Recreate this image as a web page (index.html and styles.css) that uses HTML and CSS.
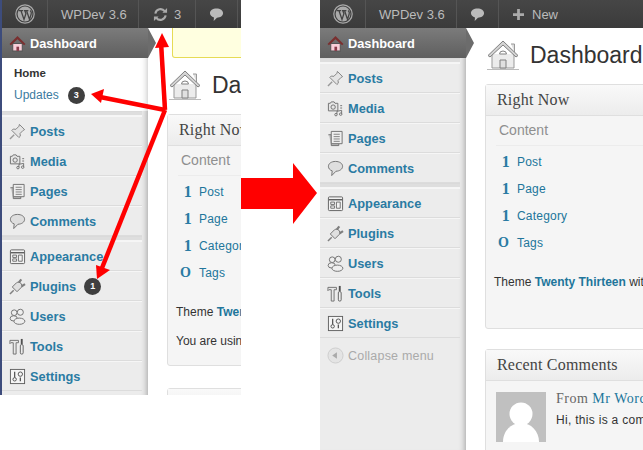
FILE: index.html
```html
<!DOCTYPE html>
<html lang="en">
<head>
    <meta charset="UTF-8">
    <meta name="viewport" content="width=device-width, initial-scale=1.0">
    <title>WordPress toolbar and menu changes</title>
    <link rel="stylesheet" href="styles.css">
</head>
<body>
    <svg class="hidden">
        <symbol id="i-wp" viewBox="0 0 20 20">
            <circle cx="10" cy="10" r="9.2" fill="none" stroke="#aaa" stroke-width="1.2"/>
            <circle cx="10" cy="10" r="7.4" fill="#aaa"/>
            <path d="M3.6 6.6h4.6M6 6.8l3 8.6 1.9-5.6-1-3M9 6.6h4.4M11.6 6.8l2.9 8.6 1.7-5.4c.5-1.5-.4-2.8-1.1-3.4" fill="none" stroke="#444" stroke-width="1.3"/>
        </symbol>
        <symbol id="i-refresh" viewBox="0 0 16 16">
            <path d="M2.5 7A5.6 5.6 0 0 1 12.5 4.5M13.5 9A5.6 5.6 0 0 1 3.5 11.5" fill="none" stroke="#aaa" stroke-width="2.2"/>
            <path d="M10 6h5V1zM6 10H1v5z" fill="#aaa"/>
        </symbol>
        <symbol id="i-bubble" viewBox="0 0 16 16">
            <path d="M8 1.5c4 0 7 2 7 5s-3 5-6.5 5L5 14.8l.3-3.6C2.8 10.5 1 8.8 1 6.5c0-3 3-5 7-5z" fill="#bbb"/>
        </symbol>
        <symbol id="i-plus" viewBox="0 0 12 12">
            <path d="M4.5 0h3v4.5H12v3H7.5V12h-3V7.5H0v-3h4.5z" fill="#aaa"/>
        </symbol>
        <symbol id="i-home" viewBox="0 0 16 16">
            <path d="M3.5 8v7h9V8z" fill="#f9cfd9" stroke="#555"/>
            <path d="M7 15v-4h2.5v4z" fill="#8a3b4a"/>
            <path d="M.5 8.5 8 1l7.5 7.5-1.3 1.2L8 4 1.8 9.7z" fill="#7a2f2f"/>
        </symbol>
        <symbol id="i-pin" viewBox="0 0 18 18">
            <path d="M5.5 12.5 1 17" stroke="#999" stroke-width="1.5"/>
            <path d="M11 1.5l5.5 5.5-1.5.8-3.3 3.3.3 2.8-1.5 1.5-7.5-7.5 1.5-1.5 2.8.3 3.3-3.3z" fill="#e4e4e4" stroke="#808080"/>
        </symbol>
        <symbol id="i-media" viewBox="0 0 18 18">
            <path d="M1.5 3.5h2l1-1.5h3l1 1.5h3v8h-10z" fill="#e6e6e6" stroke="#707070"/>
            <circle cx="6.5" cy="7.5" r="2.3" fill="none" stroke="#707070"/>
            <path d="M14 6h2M14 8.5h2M10.5 15v-3l5-1v3.5" fill="none" stroke="#707070"/>
            <circle cx="9.5" cy="15.5" r="1.3" fill="none" stroke="#707070"/>
            <circle cx="14.5" cy="15" r="1.3" fill="none" stroke="#707070"/>
        </symbol>
        <symbol id="i-pages" viewBox="0 0 18 18">
            <path d="M1.5 5h3v11.5h8v-2h-8" fill="#ccc" stroke="#707070"/>
            <path d="M4.5 1.5h11.5v13H4.5z" fill="#eee" stroke="#707070"/>
            <path d="M7 4.5h6.5M7 7h6.5M7 9.5h6.5M7 12h6.5" stroke="#808080"/>
        </symbol>
        <symbol id="i-comment" viewBox="0 0 18 18">
            <path d="M9 1.5c4.3 0 7.5 2.2 7.5 5.2s-3.2 5.1-7 5.2L5 16.5l.5-5C3 10.7 1.5 8.9 1.5 6.7c0-3 3.2-5.2 7.5-5.200z" fill="#dedede" stroke="#707070"/>
        </symbol>
        <symbol id="i-appearance" viewBox="0 0 18 18">
            <rect x="1.5" y="2" width="15" height="14.5" rx="1" fill="#f2f2f2" stroke="#606060"/>
            <path d="M2 5h14" stroke="#606060" stroke-width="1.5"/>
            <path d="M4 7.5h4V10H4zM4 11.5h4V14H4zM10 7.5h4V14h-4z" fill="none" stroke="#707070"/>
        </symbol>
        <symbol id="i-plugin" viewBox="0 0 18 18">
            <path d="M5 13 1 17" stroke="#808080" stroke-width="1.6"/>
            <path d="M10 5.5l3-4M13 9l4-2.5" stroke="#808080" stroke-width="2.4"/>
            <path d="M3.5 9.5 8 5c1.5-1 3.5-.5 4.500.5s1.5 3 .5 4.500l-4.500 4.500z" fill="#e0e0e0" stroke="#707070"/>
        </symbol>
        <symbol id="i-users" viewBox="0 0 18 18">
            <circle cx="5.5" cy="5" r="3" fill="#eee" stroke="#707070"/>
            <circle cx="12" cy="4.5" r="3.2" fill="#eee" stroke="#707070"/>
            <ellipse cx="5" cy="11" rx="3.8" ry="2.8" fill="#eee" stroke="#707070"/>
            <ellipse cx="11" cy="14" rx="5.8" ry="3.3" fill="#eee" stroke="#707070"/>
        </symbol>
        <symbol id="i-tools" viewBox="0 0 18 18">
            <path d="M1 2.5h9V5H7.5v12h-3V5H2L1 6z" fill="#e8e8e8" stroke="#707070"/>
            <path d="M13.5 1v6" stroke="#505050" stroke-width="2"/>
            <rect x="12" y="7" width="3" height="10" rx="1.3" fill="#eee" stroke="#606060"/>
        </symbol>
        <symbol id="i-settings" viewBox="0 0 18 18">
            <rect x="1.5" y="1.5" width="15" height="15" fill="#f5f5f5" stroke="#606060"/>
            <path d="M6 4v6M12 10v4" stroke="#505050" stroke-width="1.3"/>
            <circle cx="6" cy="12" r="1.8" fill="none" stroke="#505050"/>
            <circle cx="12" cy="6.5" r="2.3" fill="none" stroke="#505050"/>
        </symbol>
        <symbol id="i-collapse" viewBox="0 0 18 18">
            <circle cx="9" cy="9" r="8" fill="#e4e4e4" stroke="#ccc"/>
            <path d="M5.5 9l5-3.5v7z" fill="#aaa"/>
        </symbol>
        <symbol id="i-house" viewBox="0 0 32 30">
            <path d="M5 14v14h22V14" fill="#ececec" stroke="#999"/>
            <path d="M24 4h3.5v8" fill="#ddd" stroke="#999"/>
            <path d="M1 15.5 16 1l15 14.5-2 1.500L16 5 3 17z" fill="#d4d4d4" stroke="#808080"/>
            <path d="M13 28v-8h6v8z" fill="#e0e0e0" stroke="#808080"/>
            <path d="M12.5 14a3.5 3 0 0 1 7 0z" fill="none" stroke="#808080"/>
            <path d="M0 29.5h32" stroke="#bbb"/>
        </symbol>
    </svg>

    <div class="shot">
        <section class="panel panel-old">
            <div class="adminbar">
                <a class="bar-item bar-logo"><svg class="icon-logo"><use href="#i-wp"/></svg></a>
                <a class="bar-item bar-site">WPDev 3.6</a>
                <a class="bar-item bar-updates"><svg class="icon-bar"><use href="#i-refresh"/></svg>3</a>
                <a class="bar-item bar-comments"><svg class="icon-bar"><use href="#i-bubble"/></svg></a>
            </div>
            <div class="wp-body">
                <nav class="sidebar">
                    <a class="menu-current"><svg class="icon-menu"><use href="#i-home"/></svg>Dashboard</a>
                    <div class="submenu">
                        <a class="sub-home">Home</a>
                        <a class="sub-updates">Updates <span class="count">3</span></a>
                    </div>
                    <div class="menu-sep"></div>
                    <a class="menu-item"><svg class="icon-menu"><use href="#i-pin"/></svg>Posts</a>
                    <a class="menu-item"><svg class="icon-menu"><use href="#i-media"/></svg>Media</a>
                    <a class="menu-item"><svg class="icon-menu"><use href="#i-pages"/></svg>Pages</a>
                    <a class="menu-item"><svg class="icon-menu"><use href="#i-comment"/></svg>Comments</a>
                    <div class="menu-sep"></div>
                    <a class="menu-item"><svg class="icon-menu"><use href="#i-appearance"/></svg>Appearance</a>
                    <a class="menu-item"><svg class="icon-menu"><use href="#i-plugin"/></svg>Plugins <span class="count">1</span></a>
                    <a class="menu-item"><svg class="icon-menu"><use href="#i-users"/></svg>Users</a>
                    <a class="menu-item"><svg class="icon-menu"><use href="#i-tools"/></svg>Tools</a>
                    <a class="menu-item"><svg class="icon-menu"><use href="#i-settings"/></svg>Settings</a>
                </nav>
                <main class="content">
                    <div class="notice"></div>
                    <div class="page-title"><svg class="icon-house"><use href="#i-house"/></svg><h1>Dashboard</h1></div>
                    <div class="box box-now-old">
                        <h3>Right Now</h3>
                        <p class="box-sub">Content</p>
                        <ul class="stats">
                            <li><b>1</b><a>Post</a></li>
                            <li><b>1</b><a>Page</a></li>
                            <li><b>1</b><a>Category</a></li>
                            <li><b class="zero">O</b><a>Tags</a></li>
                        </ul>
                        <p class="theme-line">Theme <a>Twenty Thirteen</a></p>
                        <p class="version-line">You are using</p>
                    </div>
                    <div class="box">
                        <h3>Recent Comments</h3>
                    </div>
                </main>
            </div>
        </section>

        <section class="panel panel-new">
            <div class="adminbar">
                <a class="bar-item bar-logo"><svg class="icon-logo"><use href="#i-wp"/></svg></a>
                <a class="bar-item bar-site">WPDev 3.6</a>
                <a class="bar-item bar-comments"><svg class="icon-bar"><use href="#i-bubble"/></svg></a>
                <a class="bar-item bar-new"><svg class="icon-plus"><use href="#i-plus"/></svg>New</a>
            </div>
            <div class="wp-body">
                <nav class="sidebar">
                    <a class="menu-current"><svg class="icon-menu"><use href="#i-home"/></svg>Dashboard</a>
                    <div class="menu-sep"></div>
                    <a class="menu-item"><svg class="icon-menu"><use href="#i-pin"/></svg>Posts</a>
                    <a class="menu-item"><svg class="icon-menu"><use href="#i-media"/></svg>Media</a>
                    <a class="menu-item"><svg class="icon-menu"><use href="#i-pages"/></svg>Pages</a>
                    <a class="menu-item"><svg class="icon-menu"><use href="#i-comment"/></svg>Comments</a>
                    <div class="menu-sep"></div>
                    <a class="menu-item"><svg class="icon-menu"><use href="#i-appearance"/></svg>Appearance</a>
                    <a class="menu-item"><svg class="icon-menu"><use href="#i-plugin"/></svg>Plugins</a>
                    <a class="menu-item"><svg class="icon-menu"><use href="#i-users"/></svg>Users</a>
                    <a class="menu-item"><svg class="icon-menu"><use href="#i-tools"/></svg>Tools</a>
                    <a class="menu-item"><svg class="icon-menu"><use href="#i-settings"/></svg>Settings</a>
                    <a class="menu-collapse"><svg class="icon-menu"><use href="#i-collapse"/></svg>Collapse menu</a>
                </nav>
                <main class="content">
                    <div class="page-title"><svg class="icon-house"><use href="#i-house"/></svg><h1>Dashboard</h1></div>
                    <div class="box box-now-new">
                        <h3>Right Now</h3>
                        <p class="box-sub">Content</p>
                        <ul class="stats">
                            <li><b>1</b><a>Post</a></li>
                            <li><b>1</b><a>Page</a></li>
                            <li><b>1</b><a>Category</a></li>
                            <li><b class="zero">O</b><a>Tags</a></li>
                        </ul>
                        <p class="theme-line">Theme <a>Twenty Thirteen</a> with 6 Widgets</p>
                    </div>
                    <div class="box">
                        <h3>Recent Comments</h3>
                        <div class="comment">
                            <svg class="avatar" viewBox="0 0 50 50">
                                <rect width="50" height="50" fill="#c0c0c0"/>
                                <circle cx="25" cy="22" r="11.5" fill="#fff"/>
                                <path d="M7 50c0-11 8-19 18-19s18 8 18 19z" fill="#fff"/>
                            </svg>
                            <div class="comment-text">
                                <h4>From <a>Mr WordPress</a> on Hello world!</h4>
                                <p>Hi, this is a comment. To delete a comment</p>
                            </div>
                        </div>
                    </div>
                </main>
            </div>
        </section>

        <!-- red annotations drawn over both screenshots -->
        <svg class="notes" viewBox="0 0 643 450">
            <path d="M241 178h52v-15l24 30-24 31v-15h-52z" fill="#f00"/>
            <g fill="none" stroke="#f00" stroke-width="4.5">
                <path d="M165 110 161 42"/>
                <path d="M165 110 100 97"/>
                <path d="M165 110 102 268"/>
            </g>
            <g fill="#f00">
                <path d="M162 33l7 14-14 1z"/>
                <path d="M91 94l13-5-3 14z"/>
                <path d="M97 279l-1-14 14 5z"/>
            </g>
        </svg>
    </div>
</body>
</html>
```

FILE: styles.css
```css
body {
    margin: 0;
    background: #fff;
    font-family: "Liberation Sans", Arial, sans-serif;
    color: #333;
}

.hidden {
    display: none;
}

.shot {
    position: relative;
    display: flex;
    align-items: flex-start;
    width: 643px;
    height: 450px;
    overflow: hidden;
}

.panel {
    display: flex;
    flex-direction: column;
    overflow: hidden;
}

.panel-old {
    width: 239px;
    height: 395px;
    border-left: 2px solid #3d4c7c;
}

.panel-new {
    width: 323px;
    height: 450px;
    margin-left: 79px;
}

.notes {
    position: absolute;
    left: 0;
    top: 0;
    width: 643px;
    height: 450px;
}

/* toolbar */
.adminbar {
    display: flex;
    flex: none;
    height: 28px;
    background: linear-gradient(to bottom, #464646, #3b3b3b);
    color: #bbb;
    font-size: 13px;
}

.bar-item {
    display: flex;
    align-items: center;
    border-right: 1px solid #555;
    box-sizing: border-box;
}

.bar-logo {
    width: 46px;
    padding-left: 13px;
}

.bar-site {
    width: 91px;
    padding-left: 13px;
}

.bar-updates {
    width: 57px;
    padding-left: 14px;
    gap: 6px;
}

.bar-comments {
    width: 42px;
    padding-left: 13px;
}

.bar-new {
    border-right: none;
    padding-left: 14px;
    gap: 8px;
}

.icon-logo {
    width: 20px;
    height: 20px;
}

.icon-bar {
    width: 15px;
    height: 15px;
}

.icon-plus {
    width: 11px;
    height: 11px;
}

/* left menu */
.wp-body {
    display: flex;
    flex: 1;
    min-height: 0;
}

.sidebar {
    position: relative;
    flex: none;
    width: 146px;
    background: #ececec;
    box-shadow: inset -7px 0 7px -7px rgba(0, 0, 0, 0.4);
}

.menu-current,
.menu-item,
.menu-collapse {
    display: flex;
    align-items: center;
    box-sizing: border-box;
    height: 30px;
    padding: 1px 0 0 7px;
    font-size: 12.8px;
    font-weight: bold;
    color: #2a7ba3;
}

.menu-item {
    width: 140px;
    border-top: 1px solid #f6f6f6;
    border-bottom: 1px solid #dcdcdc;
}

.menu-current {
    position: relative;
    background: linear-gradient(to bottom, #7b7b7b, #5f5f5f);
    color: #fff;
}

.menu-current::after {
    content: "";
    position: absolute;
    left: 100%;
    top: 0;
    border-left: 8px solid #6c6c6c;
    border-top: 15px solid transparent;
    border-bottom: 15px solid transparent;
}

.menu-collapse {
    height: 34px;
    font-size: 12.5px;
    font-weight: normal;
    letter-spacing: 0.2px;
    color: #aaa;
}

.icon-menu {
    flex: none;
    width: 17px;
    height: 17px;
    margin-right: 4px;
}

.menu-sep {
    height: 3px;
    border-top: 1px solid #dadada;
    border-bottom: 1px solid #f5f5f5;
    background: #dedede;
    width: 140px;
}

.submenu {
    display: flex;
    flex-direction: column;
    height: 53px;
    box-sizing: border-box;
    padding: 4px 0 0 12px;
    background: #fff;
    box-shadow: inset -7px 0 7px -7px rgba(0, 0, 0, 0.3);
    font-size: 12px;
}

.submenu a {
    display: flex;
    align-items: center;
    gap: 8px;
    height: 22px;
}

.sub-home {
    font-weight: bold;
    font-size: 11.5px;
    color: #333;
}

.sub-updates {
    color: #3b7ba0;
}

.count {
    display: inline-block;
    width: 17px;
    height: 17px;
    margin-left: 8px;
    border-radius: 50%;
    background: #3f3f3f;
    color: #fff;
    font-size: 9px;
    font-weight: bold;
    line-height: 17px;
    text-align: center;
}

.submenu .count {
    margin-left: 1px;
}

/* dashboard */
.content {
    flex: 1;
    min-width: 0;
    overflow: hidden;
    background: #fff;
}

.notice {
    height: 29px;
    margin-left: 24px;
    width: 120px;
    background: #ffffe0;
    border: 1px solid #e6db55;
    border-top: none;
    border-bottom-left-radius: 3px;
}

.page-title {
    display: flex;
    align-items: center;
    height: 30px;
    padding: 12px 0 14px 21px;
}

.icon-house {
    flex: none;
    width: 32px;
    height: 30px;
}

.page-title h1 {
    margin: 0 0 0 11px;
    font-size: 23px;
    font-weight: normal;
    color: #333;
    white-space: nowrap;
}

.box {
    box-sizing: border-box;
    width: 340px;
    margin: 0 0 20px 19px;
    background: #f5f5f5;
    border: 1px solid #dfdfdf;
    border-radius: 3px;
}

.box-now-old {
    height: 252px;
    margin-bottom: 22px;
}

.box-now-new {
    height: 245px;
}

.box h3 {
    box-sizing: border-box;
    height: 31px;
    margin: 0;
    padding-left: 11px;
    border-bottom: 1px solid #dfdfdf;
    background: linear-gradient(to bottom, #f9f9f9, #ececec);
    font-family: "Liberation Serif", Georgia, serif;
    font-size: 16px;
    font-weight: normal;
    letter-spacing: 0.2px;
    line-height: 29px;
    color: #444;
}

.box-sub {
    height: 29px;
    margin: 0 0 0 10px;
    padding-left: 3px;
    border-bottom: 1px solid #ececec;
    font-size: 14px;
    line-height: 29px;
    color: #8f8f8f;
}

.stats {
    margin: 2px 0 0;
    padding: 0;
    list-style: none;
}

.stats li {
    display: flex;
    align-items: center;
    height: 27px;
    font-size: 12px;
    letter-spacing: 0.2px;
}

.stats b {
    width: 24px;
    margin-right: 7px;
    font-family: "Liberation Serif", Georgia, serif;
    font-size: 16px;
    font-weight: bold;
    text-align: right;
    color: #2a7ba3;
}

.stats b.zero {
    font-size: 14px;
    padding-right: 1px;
    width: 23px;
}

.stats a {
    color: #21759b;
}

.theme-line,
.version-line {
    margin: 0;
    padding-left: 8px;
    font-size: 12px;
    white-space: nowrap;
}

.theme-line {
    margin-top: 19px;
}

.theme-line a {
    font-weight: bold;
    color: #21759b;
}

.version-line {
    margin-top: 15px;
}

/* recent comments */
.comment {
    display: flex;
    gap: 10px;
    padding: 11px 10px;
}

.avatar {
    flex: none;
    width: 50px;
    height: 50px;
}

.comment-text {
    white-space: nowrap;
}

.comment-text h4 {
    margin: -1px 0 0;
    font-family: "Liberation Serif", Georgia, serif;
    font-size: 14px;
    font-weight: normal;
    letter-spacing: 0.5px;
    color: #666;
}

.comment-text h4 a {
    color: #21759b;
}

.comment-text p {
    margin: 6px 0 0;
    font-size: 12px;
    letter-spacing: 0.3px;
    color: #333;
}
```
